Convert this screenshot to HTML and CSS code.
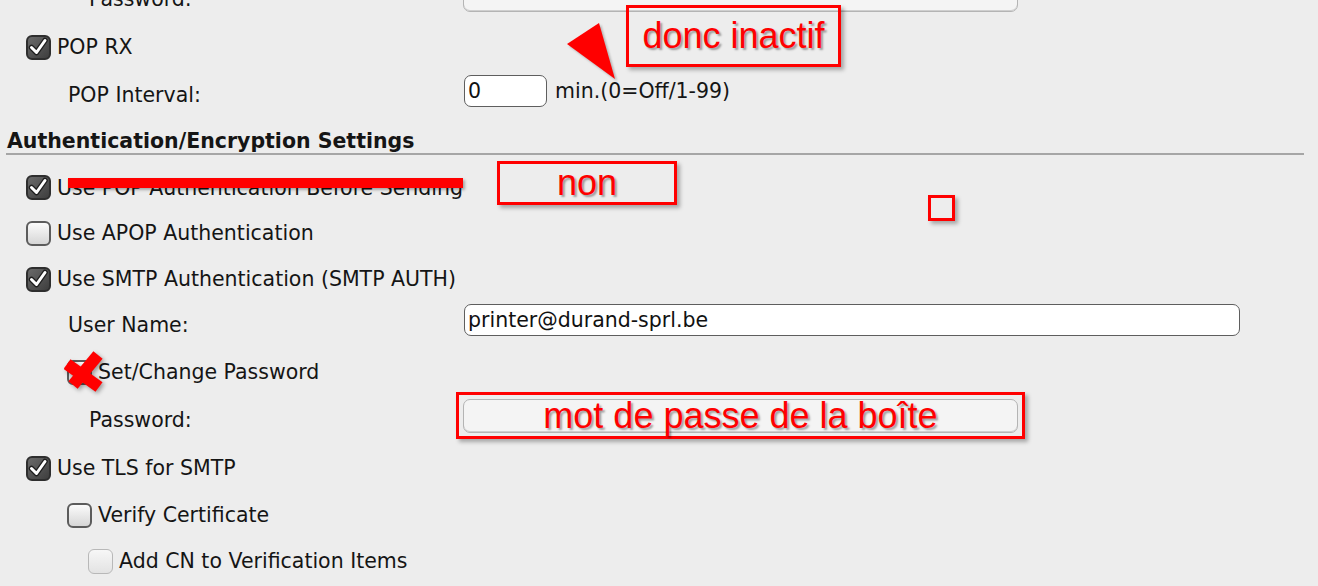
FILE: index.html
```html
<!DOCTYPE html>
<html lang="fr">
<head>
<meta charset="utf-8">
<title>Authentication/Encryption Settings</title>
<link rel="stylesheet" href="styles.css">
</head>
<body>
<div class="form">
  <div class="field tall">
    <span class="label lv3">Password:</span>
    <span class="input disabled wide"></span>
  </div>
  <div class="row tall lv1">
    <span class="cb on"><svg viewBox="0 0 25 25"><path class="ck-bg" d="M5.5 12.5 L10.5 17.5 L19 5.5"/><path class="ck" d="M5.5 12.5 L10.5 17.5 L19 5.5"/></svg></span>
    <span class="txt">POP RX</span>
  </div>
  <div class="field tall">
    <span class="label lv2">POP Interval:</span>
    <span class="inline"><span class="input small">0</span><span class="hint">min.(0=Off/1-99)</span></span>
  </div>
  <div class="heading">Authentication/Encryption Settings</div>
  <div class="row short lv1">
    <span class="cb on"><svg viewBox="0 0 25 25"><path class="ck-bg" d="M5.5 12.5 L10.5 17.5 L19 5.5"/><path class="ck" d="M5.5 12.5 L10.5 17.5 L19 5.5"/></svg></span>
    <span class="txt">Use POP Authentication Before Sending</span>
  </div>
  <div class="row lv1">
    <span class="cb"></span>
    <span class="txt">Use APOP Authentication</span>
  </div>
  <div class="row lv1">
    <span class="cb on"><svg viewBox="0 0 25 25"><path class="ck-bg" d="M5.5 12.5 L10.5 17.5 L19 5.5"/><path class="ck" d="M5.5 12.5 L10.5 17.5 L19 5.5"/></svg></span>
    <span class="txt">Use SMTP Authentication (SMTP AUTH)</span>
  </div>
  <div class="field">
    <span class="label lv2">User Name:</span>
    <span class="input email">printer@durand-sprl.be</span>
  </div>
  <div class="row tall lv2">
    <span class="cb"></span>
    <span class="txt">Set/Change Password</span>
  </div>
  <div class="field tall">
    <span class="label lv3">Password:</span>
    <span class="input disabled wide"></span>
  </div>
  <div class="row tall lv1">
    <span class="cb on"><svg viewBox="0 0 25 25"><path class="ck-bg" d="M5.5 12.5 L10.5 17.5 L19 5.5"/><path class="ck" d="M5.5 12.5 L10.5 17.5 L19 5.5"/></svg></span>
    <span class="txt">Use TLS for SMTP</span>
  </div>
  <div class="row lv2">
    <span class="cb"></span>
    <span class="txt">Verify Certificate</span>
  </div>
  <div class="row lv3">
    <span class="cb off"></span>
    <span class="txt">Add CN to Verification Items</span>
  </div>
</div>

<div class="note note-donc">donc inactif</div>
<svg class="arrow" viewBox="0 0 60 70" width="60" height="70"><polygon points="2,23 34,2 50,58" fill="#ff0000"/></svg>
<div class="note note-non">non</div>
<div class="note note-sq"></div>
<div class="strike"></div>
<svg class="xmark" viewBox="0 0 40 44" width="40" height="44"><line x1="3" y1="13" x2="35" y2="36" stroke="#ff0000" stroke-width="12"/><line x1="34" y1="4" x2="9" y2="34" stroke="#ff0000" stroke-width="12"/></svg>
<div class="note note-pw">mot de passe de la boîte</div>
</body>
</html>
```

FILE: styles.css
```css
html, body {
  margin: 0;
  padding: 0;
}
body {
  background: #ededed;
  font-family: "DejaVu Sans", Verdana, sans-serif;
  font-size: 20.5px;
  color: #151515;
  width: 1318px;
  height: 586px;
  overflow: hidden;
  position: relative;
}
.form {
  width: 1298px;
  padding-left: 6px;
  margin-top: -25px;
}
.row {
  display: flex;
  align-items: center;
  gap: 6px;
  height: 46px;
}
.field {
  display: grid;
  grid-template-columns: 457px 1fr;
  align-items: center;
  height: 46px;
}
.tall { height: 48px; }
.short { height: 45px; }
.lv1 { padding-left: 20px; }
.lv2 { padding-left: 61px; }
.lv3 { padding-left: 82px; }
.label.lv2 { padding-left: 62px; }
.label.lv3 { padding-left: 83px; }

.cb {
  flex: none;
  width: 25px;
  height: 25px;
  box-sizing: border-box;
  border-radius: 6px;
  border: 2px solid #5c5c5c;
  background: linear-gradient(#fbfbfb, #d6d6d6);
  display: block;
  position: relative;
}
.cb.on {
  border-color: #2e2e2e;
  background: linear-gradient(135deg, #6a6a6a, #3e3e3e);
}
.cb.off {
  border: 1.5px solid #b8b8b8;
  background: linear-gradient(#f7f7f7, #e3e3e3);
}
.cb svg {
  position: absolute;
  left: -2px;
  top: -2px;
  width: 25px;
  height: 25px;
}
.ck-bg {
  fill: none;
  stroke: #1e1e1e;
  stroke-width: 5.5;
  stroke-linecap: round;
  stroke-linejoin: round;
}
.ck {
  fill: none;
  stroke: #ffffff;
  stroke-width: 3;
  stroke-linecap: round;
  stroke-linejoin: round;
}

.input {
  display: block;
  box-sizing: border-box;
  height: 32px;
  line-height: 30px;
  border: 1.5px solid #5e5e5e;
  border-radius: 7px;
  background: #ffffff;
  padding-left: 3px;
  color: #111;
  white-space: nowrap;
}
.input.small {
  width: 83px;
  margin-bottom: 8px;
}
.input.email {
  width: 776px;
  margin-left: 1px;
  margin-bottom: 10px;
}
.input.wide {
  width: 555px;
  height: 34px;
  margin-bottom: 8px;
}
.input.disabled {
  background: #f4f4f4;
  border: 1.5px solid #b4b4b4;
  box-shadow: inset 0 -1px 0 #cfcfcf;
}
.inline {
  display: flex;
  align-items: center;
  gap: 8px;
  padding-left: 1px;
}
.hint { margin-top: -8px; }

.heading {
  font-weight: bold;
  width: 1298px;
  padding-left: 1px;
  box-sizing: border-box;
  height: 36px;
  padding-top: 10px;
  border-bottom: 2px solid #a6a6a6;
  line-height: 25px;
}
.heading + .row { margin-top: 10px; }

.note {
  position: absolute;
  box-sizing: border-box;
  border: 3px solid #ff0000;
  box-shadow: 3px 3px 4px rgba(0, 0, 0, 0.3);
  font-family: "Liberation Sans", Arial, sans-serif;
  font-size: 36px;
  color: #ff0000;
  text-shadow: 2px 2px 2px rgba(0, 0, 0, 0.35);
  text-align: center;
}
.note-donc {
  left: 626px;
  top: 5px;
  width: 215px;
  height: 62px;
  line-height: 56px;
}
.note-non {
  left: 497px;
  top: 161px;
  width: 180px;
  height: 44px;
  line-height: 38px;
}
.note-sq {
  left: 928px;
  top: 195px;
  width: 27px;
  height: 26px;
}
.note-pw {
  left: 456px;
  top: 392px;
  width: 569px;
  height: 47px;
  line-height: 41px;
}
.arrow {
  position: absolute;
  left: 565px;
  top: 21px;
  filter: drop-shadow(2px 2px 1px rgba(0, 0, 0, 0.25));
}
.strike {
  position: absolute;
  left: 68px;
  top: 178px;
  width: 395px;
  height: 10px;
  background: #ff0000;
  box-shadow: 2px 2px 3px rgba(0, 0, 0, 0.3);
}
.xmark {
  position: absolute;
  left: 64px;
  top: 351px;
  filter: drop-shadow(2px 2px 2px rgba(0, 0, 0, 0.35));
}
```
